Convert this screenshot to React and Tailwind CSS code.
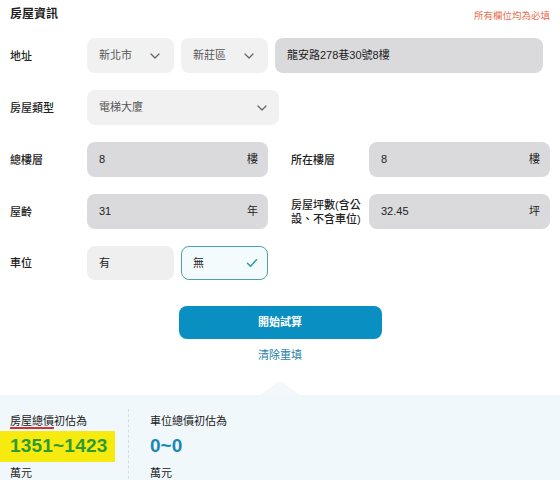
import React from "react";

const font = { fontFamily: '"Liberation Sans", "Noto Sans CJK TC", sans-serif' };

function Chevron({ className = "" }) {
  return (
    <svg width="10" height="6" viewBox="0 0 10 6" className={className}>
      <path d="M1 1l4 4 4-4" fill="none" stroke="#666" strokeWidth="1.3" strokeLinecap="round" strokeLinejoin="round" />
    </svg>
  );
}

function Select({ value, className = "" }) {
  return (
    <div className={`h-[35px] rounded-lg bg-[#f1f1f2] flex items-center justify-between pl-3 pr-[14px] ${className}`}>
      <span className="text-[11px] text-[#555]">{value}</span>
      <Chevron />
    </div>
  );
}

function Field({ value, unit, className = "" }) {
  return (
    <div className={`h-[35px] rounded-lg bg-[#dadadc] flex items-center justify-between pl-3 pr-[10px] ${className}`}>
      <span className="text-[11px] text-[#222]">{value}</span>
      {unit && <span className="text-[11px] text-[#222]">{unit}</span>}
    </div>
  );
}

function Label({ children, className = "" }) {
  return <div className={`text-[11px] leading-[14px] text-[#222] font-medium ${className}`}>{children}</div>;
}

export default function App() {
  return (
    <div style={font} className="w-[560px] h-[480px] bg-white overflow-hidden flex flex-col">
      <div className="px-[10px]">
        <div className="flex items-center justify-between pt-[6px] h-[22px]">
          <span className="text-[12px] font-bold text-[#222] leading-[16px]">房屋資訊</span>
          <span className="text-[9.5px] text-[#e8704f] mt-[4px]">所有欄位均為必填</span>
        </div>

        <div className="mt-[16px] flex flex-col gap-[17px]">
          <div className="flex items-center">
            <Label className="w-[77px]">地址</Label>
            <Select value="新北市" className="w-[87px]" />
            <Select value="新莊區" className="w-[87px] ml-[7px]" />
            <Field value="龍安路278巷30號8樓" className="w-[268px] ml-[7px]" />
          </div>

          <div className="flex items-center">
            <Label className="w-[77px]">房屋類型</Label>
            <div className="w-[192px] h-[35px] rounded-lg bg-[#f1f1f2] flex items-center justify-between pl-3 pr-[12px]">
              <span className="text-[11px] text-[#555]">電梯大廈</span>
              <Chevron />
            </div>
          </div>

          <div className="flex items-center">
            <Label className="w-[77px]">總樓層</Label>
            <Field value="8" unit="樓" className="w-[181px]" />
            <Label className="w-[78px] ml-[23px]">所在樓層</Label>
            <Field value="8" unit="樓" className="w-[181px]" />
          </div>

          <div className="flex items-center">
            <Label className="w-[77px]">屋齡</Label>
            <Field value="31" unit="年" className="w-[181px]" />
            <Label className="w-[78px] ml-[23px] pr-[8px]">房屋坪數(含公設、不含車位)</Label>
            <Field value="32.45" unit="坪" className="w-[181px]" />
          </div>

          <div className="flex items-center">
            <Label className="w-[77px]">車位</Label>
            <div className="w-[87px] h-[34px] rounded-lg bg-[#efeff0] flex items-center pl-3">
              <span className="text-[11px] text-[#222]">有</span>
            </div>
            <div className="w-[87px] h-[34px] ml-[7px] rounded-lg bg-[#f3fbfc] border border-[#4fa2a8] flex items-center justify-between pl-[11px] pr-[9px]">
              <span className="text-[11px] text-[#222]">無</span>
              <svg width="12" height="10" viewBox="0 0 12 10">
                <path d="M1.5 5.2l3 3L10.5 1.8" fill="none" stroke="#2b9aa0" strokeWidth="1.5" strokeLinecap="round" strokeLinejoin="round" />
              </svg>
            </div>
          </div>
        </div>

        <div className="flex flex-col items-center mt-[26px]">
          <button className="w-[203px] h-[33px] rounded-lg bg-[#0a8fc3] text-white text-[11px] font-bold">開始試算</button>
          <span className="mt-[8px] text-[11px] text-[#1d7fa6]">清除重填</span>
        </div>
      </div>

      <div className="relative mt-[31px] flex-1 bg-[#f1f8fc]">
        <svg width="40" height="14" viewBox="0 0 40 14" className="absolute left-[260px] -top-[14px]">
          <path d="M0 14 L17 1.5 Q20 -0.5 23 1.5 L40 14 Z" fill="#f4f8fa" />
        </svg>
        <div className="flex pt-[18px]">
          <div className="w-[128px] flex flex-col">
            <div className="pl-[10px] text-[11px] text-[#222] leading-[16px]">
              <span className="border-b-[2px] border-[#d9302f]">房屋總價</span>初估為
            </div>
            <div className="mt-[2px] w-[115px] h-[31px] bg-[#f6ea0e] flex items-center pl-[10px]">
              <span className="text-[19px] font-bold text-[#2e9a34] tracking-[0.2px]">1351~1423</span>
            </div>
            <div className="pl-[10px] mt-[3px] text-[11px] text-[#222]">萬元</div>
          </div>
          <div className="border-l border-dashed border-[#d5dde2] h-[80px] -mt-[4px]" />
          <div className="pl-[21px] flex flex-col">
            <div className="text-[11px] text-[#222] leading-[16px]">車位總價初估為</div>
            <div className="mt-[2px] h-[31px] flex items-center">
              <span className="text-[19px] font-bold text-[#1a86b4]">0~0</span>
            </div>
            <div className="mt-[3px] text-[11px] text-[#222]">萬元</div>
          </div>
        </div>
      </div>
    </div>
  );
}
